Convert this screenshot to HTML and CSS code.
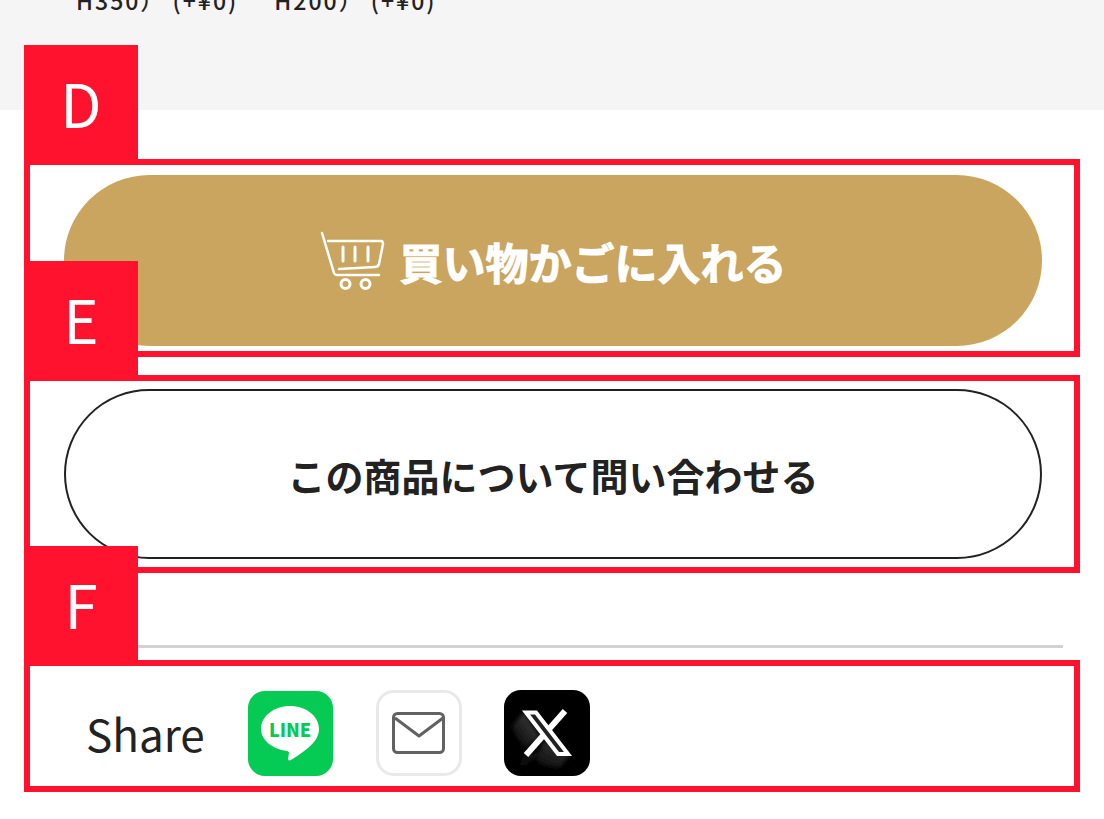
FILE: index.html
```
<!DOCTYPE html>
<html lang="ja">
<head>
<meta charset="utf-8">
<title>商品ページ</title>
<meta name="viewport" content="width=device-width, initial-scale=1">
<link rel="stylesheet" href="styles.css">
</head>
<body>
<section class="options">
  <span class="option">H350） (+¥0)</span>
  <span class="option">H200） (+¥0)</span>
</section>
<main class="content">
  <section class="frame frame-cart">
    <span class="tag">D</span>
    <button class="pill pill-cart" type="button">
      <svg class="cart-icon" viewBox="0 0 66 60" aria-hidden="true">
        <g fill="none" stroke="#fff" stroke-width="2.500" stroke-linecap="round" stroke-linejoin="round">
          <path d="M2 2l12 40q1 2 3 2h42M8 10h53q2 0 2 3l-4 20q-1 3-4 3l-36 2"/>
          <path stroke-width="3" d="M23 16v14M35 16v14M48 16v14"/>
          <circle cx="25.500" cy="53" r="4.500" stroke-width="3"/>
          <circle cx="45.500" cy="53" r="4.500" stroke-width="3"/>
        </g>
      </svg>
      <span>買い物かごに入れる</span>
    </button>
  </section>
  <section class="frame frame-contact">
    <span class="tag">E</span>
    <button class="pill pill-contact" type="button">この商品について問い合わせる</button>
  </section>
  <hr class="divider">
  <section class="frame frame-share">
    <span class="tag">F</span>
    <span class="share-label">Share</span>
    <a class="share-link" href="#line" aria-label="LINE">
      <svg viewBox="0 0 86 86" aria-hidden="true">
        <rect y="1" width="85" height="85" rx="17" fill="#05ca54"/>
        <path fill="#fff" d="M42 16c16 0 29 10 29 23 0 7-4 13-11 19-6 5-12 9-17 12-2 1-3 0-3-1l1-6c0-1-1-2-2-2-15-2-26-11-26-22 0-13 13-23 29-23z"/>
        <text class="line-text" x="42" y="47" text-anchor="middle">LINE</text>
      </svg>
    </a>
    <a class="share-link" href="#mail" aria-label="メール">
      <svg viewBox="0 0 86 86" aria-hidden="true">
        <rect x="1.500" y="1.500" width="83" height="83" rx="16" fill="#fff" stroke="#e9e9e9" stroke-width="3"/>
        <g fill="none" stroke="#626262" stroke-width="3" stroke-linejoin="round">
          <rect x="17.500" y="23.500" width="50" height="39" rx="4"/>
          <path d="M19 28l24 18 24-18"/>
        </g>
      </svg>
    </a>
    <a class="share-link" href="#x" aria-label="X">
      <svg viewBox="0 0 86 86" aria-hidden="true">
        <defs>
          <linearGradient id="shade" x1="1" y1="0" x2="0" y2="1">
            <stop offset="0" stop-color="#3a3a3a"/>
            <stop offset="1" stop-color="#000"/>
          </linearGradient>
          <linearGradient id="shade-top" x1="1" y1="0" x2="0" y2="1">
            <stop offset="0" stop-color="#4a4a4a"/>
            <stop offset="1" stop-color="#000"/>
          </linearGradient>
          <filter id="soft">
            <feGaussianBlur stdDeviation="2"/>
          </filter>
        </defs>
        <rect width="86" height="86" rx="17"/>
        <g filter="url(#soft)">
          <path fill="url(#shade-top)" d="M20 22L8 36q3 12 14 22l14-11z"/>
          <path fill="url(#shade)" d="M22 64L11 78h8l18-16zM40 50l-8 20q8 8 24 7l10-12z"/>
        </g>
        <path d="M61 21L22 65" fill="none" stroke="#fff" stroke-width="6"/>
        <path d="M22 22.500h10l32 41.500H54z" fill="#222" stroke="#fff" stroke-width="4"/>
      </svg>
    </a>
  </section>
</main>
</body>
</html>
```
FILE: styles.css
```
* {
  box-sizing: border-box;
}

body {
  margin: 0;
  background: #fff;
  color: #222;
  font-family: "Noto Sans CJK JP", sans-serif;
}

.options {
  display: flex;
  align-items: flex-end;
  gap: 36px;
  height: 110px;
  padding: 0 76px 98px;
  overflow: hidden;
  background: #f5f5f5;
}

.option {
  font-size: 23px;
  font-weight: 500;
  line-height: 24px;
  letter-spacing: 2px;
  white-space: nowrap;
}

.content {
  display: flex;
  flex-direction: column;
  padding: 49px 24px 27px;
}

.frame {
  position: relative;
  display: flex;
  border: 6px solid #ff122d;
}

.frame-cart {
  padding: 10px 32px 5px 34px;
}

.frame-contact {
  margin-top: 18px;
  padding: 8px 32px 8px 34px;
}

.frame-share {
  align-items: center;
  padding: 24px 56px 10px;
}

.tag {
  position: absolute;
  left: -6px;
  bottom: 100%;
  width: 114px;
  height: 120px;
  background: #ff122d;
  color: #fff;
  font-size: 60px;
  line-height: 114px;
  text-align: center;
}

.pill {
  display: flex;
  flex: 1;
  align-items: center;
  justify-content: center;
  border-radius: 86px;
  font-family: inherit;
  font-weight: 700;
}

.pill-cart {
  gap: 14px;
  height: 171px;
  border: 0;
  background: #c9a55f;
  color: #fff;
  font-size: 43px;
  -webkit-text-stroke: 1px #fff;
}

.pill-contact {
  height: 170px;
  border: 2px solid #222;
  background: #fff;
  color: #222;
  font-size: 38px;
}

.cart-icon {
  width: 66px;
  height: 60px;
}

.divider {
  width: calc(100% - 17px);
  height: 3px;
  margin: 72px 0 12px;
  border: 0;
  background: #d2d2d2;
}

.share-label {
  margin-right: 43px;
  font-size: 44px;
  line-height: 84px;
}

.share-link {
  width: 86px;
  height: 86px;
  margin-right: 42px;
}

.share-link svg {
  display: block;
}

.line-text {
  fill: #05ca54;
  font-family: "Noto Sans CJK JP", sans-serif;
  font-size: 18px;
  font-weight: 900;
}
```
